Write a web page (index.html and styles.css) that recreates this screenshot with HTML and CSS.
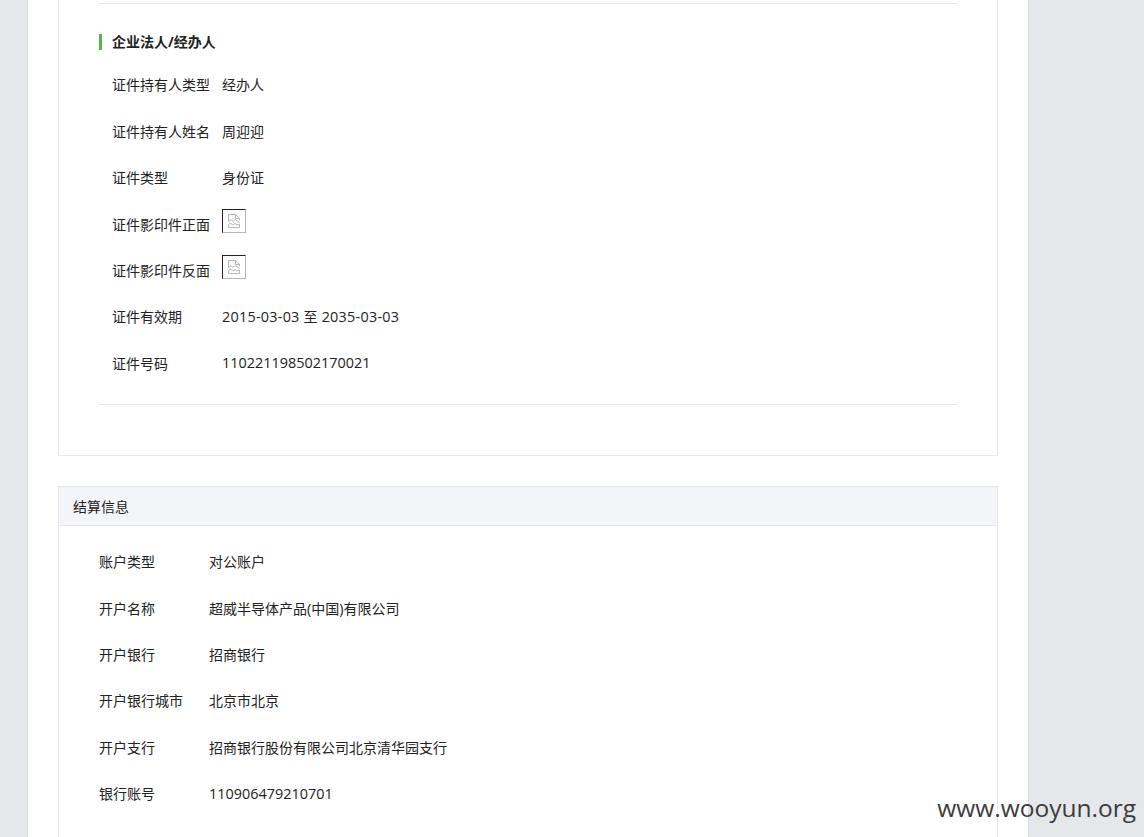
FILE: index.html
```html
<!DOCTYPE html>
<html lang="zh">
<head>
<meta charset="utf-8">
<title>商户资料</title>
<link rel="stylesheet" href="styles.css">
</head>
<body>
<main class="page">
  <section class="card card-top">
    <div class="inner">
      <h3 class="sub-title">企业法人/经办人</h3>
      <dl class="rows">
        <div class="row"><dt>证件持有人类型</dt><dd>经办人</dd></div>
        <div class="row"><dt>证件持有人姓名</dt><dd>周迎迎</dd></div>
        <div class="row"><dt>证件类型</dt><dd>身份证</dd></div>
        <div class="row"><dt>证件影印件正面</dt><dd><span class="broken"><svg viewBox="0 0 16 16" width="16" height="16"><path d="M2.500 8.500V1.500H9.500L13.500 5.500V7.500M9.500 1.500V5.500H13.500M2.500 8.500L5 6.500L7 8.500L9 6.500L13.500 9.500M2.500 11V14.500H13.500V11M2.500 11.500L4.500 10L6.500 12L9 10.500L11 12L13.500 11" fill="none" stroke="#b5b5b5" stroke-width="1"/></svg></span></dd></div>
        <div class="row"><dt>证件影印件反面</dt><dd><span class="broken"><svg viewBox="0 0 16 16" width="16" height="16"><path d="M2.500 8.500V1.500H9.500L13.500 5.500V7.500M9.500 1.500V5.500H13.500M2.500 8.500L5 6.500L7 8.500L9 6.500L13.500 9.500M2.500 11V14.500H13.500V11M2.500 11.500L4.500 10L6.500 12L9 10.500L11 12L13.500 11" fill="none" stroke="#b5b5b5" stroke-width="1"/></svg></span></dd></div>
        <div class="row"><dt>证件有效期</dt><dd class="date"><span class="num">2015-03-03</span> 至 <span class="num">2035-03-03</span></dd></div>
        <div class="row"><dt>证件号码</dt><dd><span class="num">110221198502170021</span></dd></div>
      </dl>
    </div>
  </section>
  <section class="card card-bottom">
    <h2 class="card-head">结算信息</h2>
    <dl class="rows rows-settle">
      <div class="row"><dt>账户类型</dt><dd>对公账户</dd></div>
      <div class="row"><dt>开户名称</dt><dd>超威半导体产品<span class="num">(</span>中国<span class="num">)</span>有限公司</dd></div>
      <div class="row"><dt>开户银行</dt><dd>招商银行</dd></div>
      <div class="row"><dt>开户银行城市</dt><dd>北京市北京</dd></div>
      <div class="row"><dt>开户支行</dt><dd>招商银行股份有限公司北京清华园支行</dd></div>
      <div class="row"><dt>银行账号</dt><dd><span class="num">110906479210701</span></dd></div>
    </dl>
  </section>
</main>
<div class="watermark">www.wooyun.org</div>
</body>
</html>
```
FILE: styles.css
```css
html, body {
  margin: 0;
  padding: 0;
  height: 837px;
  overflow: hidden;
  background: #e6e7eb;
  font-family: "Open Sans", "Noto Sans CJK SC", sans-serif;
  font-size: 14px;
  color: #222;
}
.page {
  box-sizing: border-box;
  width: 1002px;
  height: 837px;
  margin-left: 27px;
  padding: 0 30px;
  background: #fff;
  border-left: 1px solid #dcdde1;
  border-right: 1px solid #dcdde1;
  overflow: hidden;
}
.card {
  width: 940px;
  box-sizing: border-box;
  border: 1px solid #e7e7eb;
  border-top: 0;
}
.card-top {
  height: 456px;
  padding: 3px 40px 0;
}
.inner {
  height: 402px;
  border-top: 1px solid #e7e7eb;
  border-bottom: 1px solid #e7e7eb;
  box-sizing: border-box;
  padding-top: 30px;
}
.sub-title {
  margin: 0;
  height: 16px;
  line-height: 16px;
  border-left: 3px solid #4fb84f;
  padding-left: 10px;
  font-size: 14px;
  font-weight: 700;
  color: #222;
}
.rows {
  margin: 11.200px 0 0;
  padding-left: 13px;
}
.row {
  display: flex;
  align-items: center;
  height: 46.400px;
}
.row dt {
  width: 110px;
  flex: none;
  font-size: 14px;
}
.row dd {
  margin: 0;
}
.num {
  font-size: 14.400px;
  letter-spacing: 0.020px;
}
.date {
  letter-spacing: 0.250px;
}
.date .num {
  letter-spacing: 0.250px;
}
.broken {
  box-sizing: border-box;
  display: flex;
  align-items: center;
  justify-content: center;
  width: 24px;
  height: 24px;
  margin-top: -6px;
  border: 1px solid;
  border-color: #222 #b5b5b5 #b5b5b5 #222;
}
.card-bottom {
  margin-top: 30px;
  height: 400px;
  border-top: 1px solid #e7e7eb;
}
.card-head {
  margin: 0;
  height: 39px;
  line-height: 39px;
  box-sizing: border-box;
  padding-left: 14px;
  font-size: 14px;
  font-weight: 400;
  background: #f4f5f9;
  border-bottom: 1px solid #e7e7eb;
}
.rows-settle {
  margin: 12px 0 0;
  padding-left: 40px;
}
.watermark {
  position: absolute;
  right: 8px;
  top: 793px;
  font-family: "Open Sans", sans-serif;
  font-size: 24.500px;
  line-height: 30px;
  color: #3c3c3c;
}
```
